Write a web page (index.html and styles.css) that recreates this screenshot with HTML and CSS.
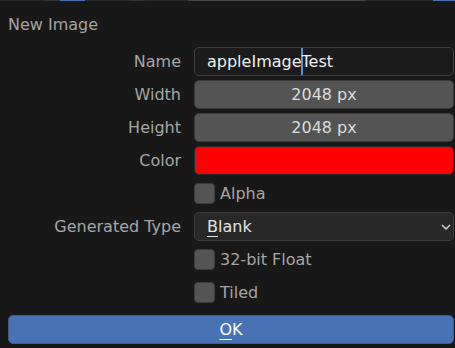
FILE: index.html
```html
<!DOCTYPE html>
<html>
<head>
<meta charset="utf-8">
<link rel="stylesheet" href="styles.css">
</head>
<body>
<div class="strip">
  <span class="seg s1"></span><span class="seg s2"></span><span class="seg blue s3"></span><span class="seg s4"></span><span class="seg s5"></span><span class="seg s6"></span><span class="seg s7"></span><span class="seg s8"></span><span class="seg s9"></span><span class="seg blue s10"></span>
</div>
<div class="dialog">
  <div class="title">New Image</div>
  <div class="form">
    <div class="label">Name</div>
    <div class="field text">appleImage<span class="caret"></span>Test</div>

    <div class="label">Width</div>
    <div class="field num">2048 px</div>

    <div class="label">Height</div>
    <div class="field num">2048 px</div>

    <div class="label">Color</div>
    <div class="field color"></div>

    <div class="label"></div>
    <div class="check"><span class="box"></span><span>Alpha</span></div>

    <div class="label">Generated Type</div>
    <div class="field select"><span><u>B</u>lank</span>
      <svg class="chev" width="10" height="6" viewBox="0 0 10 6"><polyline points="1,1 5,5 9,1" fill="none" stroke="#d8d8d8" stroke-width="1.4"/></svg>
    </div>

    <div class="label"></div>
    <div class="check"><span class="box"></span><span>32-bit Float</span></div>

    <div class="label"></div>
    <div class="check"><span class="box"></span><span>Tiled</span></div>
  </div>
  <div class="ok"><span><u>O</u>K</span></div>
</div>
</body>
</html>
```

FILE: styles.css
```css
html, body {
  margin: 0;
  padding: 0;
  background: #181818;
  width: 455px;
  height: 348px;
  overflow: hidden;
  font-family: "DejaVu Sans", "Noto Sans", sans-serif;
  font-size: 16px;
}

.strip {
  display: flex;
  height: 1px;
  background: #2a2a2a;
}
.seg { display: block; height: 1px; }
.s1 { width: 45px; background: #2a2a2a; }
.s2 { width: 15px; background: #333333; }
.s3 { width: 25px; }
.s4 { width: 45px; background: #2a2a2a; }
.s5 { width: 15px; background: #333333; }
.s6 { width: 43px; background: #2a2a2a; }
.s7 { width: 90px; background: #454545; }
.s8 { width: 87px; background: #454545; }
.s9 { width: 68px; background: #2a2a2a; }
.s10 { width: 22px; }
.blue { background: #4772b3; }

.dialog {
  padding: 0 1px 0 8px;
}

.title {
  color: #a3a3a3;
  line-height: 20px;
  margin-top: 14px;
  margin-bottom: 12px;
  padding-left: 0;
}

.form {
  display: grid;
  grid-template-columns: 173px 260px;
  column-gap: 13px;
  row-gap: 4px;
  grid-auto-rows: 29px;
}

.label {
  color: #a6a6a6;
  text-align: right;
  line-height: 29px;
}

.field {
  box-sizing: border-box;
  height: 29px;
  border-radius: 5px;
  line-height: 27px;
  color: #e4e4e4;
  border: 1px solid #2e2e2e;
}

.text {
  background: #1b1b1b;
  border-color: #3f3f3f;
  padding-left: 12px;
  color: #f0f0f0;
  white-space: nowrap;
}

.caret {
  display: inline-block;
  width: 2px;
  height: 27px;
  margin: 0 -1px;
  vertical-align: top;
  background: #5a8fe0;
}

.num {
  background: #545454;
  border-color: #3a3a3a;
  text-align: center;
  color: #dcdcdc;
}

.color {
  background: #ff0000;
  border-color: #2a2a2a;
}

.check {
  display: flex;
  align-items: center;
  gap: 5px;
  color: #a6a6a6;
}
.box {
  width: 21px;
  height: 21px;
  border-radius: 4px;
  background: #545454;
  box-sizing: border-box;
  border: 1px solid #3d3d3d;
}

.select {
  background: #282828;
  border-color: #3d3d3d;
  display: flex;
  align-items: center;
  justify-content: space-between;
  padding: 0 1px 0 12px;
  color: #e2e2e2;
}
.select u, .ok u {
  text-decoration-thickness: 1px;
  text-underline-offset: 4px;
}
.chev {
  margin-right: 1px;
}

.ok {
  margin-top: 8px;
  height: 29px;
  box-sizing: border-box;
  border-radius: 5px;
  background: #4772b3;
  border: 1px solid #3a5b8c;
  color: #ffffff;
  text-align: center;
  line-height: 27px;
}
```
